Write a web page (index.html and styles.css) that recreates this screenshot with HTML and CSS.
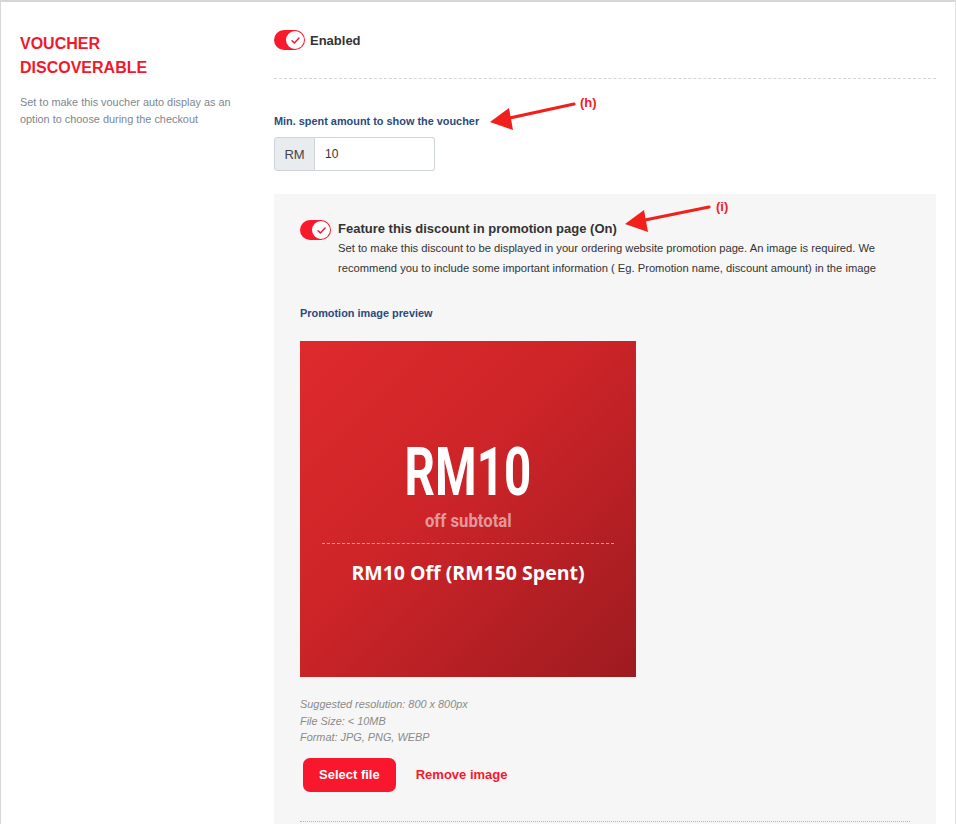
FILE: index.html
```html
<!DOCTYPE html>
<html>
<head>
<meta charset="utf-8">
<link rel="stylesheet" href="styles.css">
</head>
<body>
<div class="page">
  <div class="section">
    <div class="side">
      <h2 class="side-title">VOUCHER<br>DISCOVERABLE</h2>
      <p class="side-desc">Set to make this voucher auto display as an option to choose during the checkout</p>
    </div>
    <div class="main">
      <div class="toggle-row">
        <span class="toggle"><span class="knob"><svg viewBox="0 0 12 12" width="11" height="11"><path d="M2.2 6.3 L4.8 8.6 L9.8 3.4" fill="none" stroke="#f2182c" stroke-width="1.6" stroke-linecap="round" stroke-linejoin="round"/></svg></span></span>
        <span class="toggle-label">Enabled</span>
      </div>
      <div class="dash"></div>
      <label class="field-label">Min. spent amount to show the voucher</label>
      <div class="input-group">
        <span class="addon">RM</span>
        <span class="input">10</span>
      </div>
      <div class="feature-box">
        <div class="feature-row">
          <span class="toggle"><span class="knob"><svg viewBox="0 0 12 12" width="11" height="11"><path d="M2.2 6.3 L4.8 8.6 L9.8 3.4" fill="none" stroke="#f2182c" stroke-width="1.6" stroke-linecap="round" stroke-linejoin="round"/></svg></span></span>
          <div class="feature-text">
            <div class="feature-title">Feature this discount in promotion page (On)</div>
            <div class="feature-desc">Set to make this discount to be displayed in your ordering website promotion page. An image is required. We recommend you to include some important information ( Eg. Promotion name, discount amount) in the image</div>
          </div>
        </div>
        <div class="field-label preview-label">Promotion image preview</div>
        <div class="promo">
          <div class="promo-amount"><span>RM10</span></div>
          <div class="promo-sub"><span>off subtotal</span></div>
          <div class="promo-line"></div>
          <div class="promo-name">RM10 Off (RM150 Spent)</div>
        </div>
        <div class="hints">
          <div>Suggested resolution: 800 x 800px</div>
          <div>File Size: &lt; 10MB</div>
          <div>Format: JPG, PNG, WEBP</div>
        </div>
        <div class="actions">
          <button class="btn-select">Select file</button>
          <button class="btn-remove">Remove image</button>
        </div>
        <div class="dotted"></div>
      </div>
    </div>
  </div>
  <svg class="annotations" width="956" height="260" viewBox="0 0 956 260">
    <g fill="#f2201d" stroke="none">
      <line x1="574" y1="104" x2="505" y2="119" stroke="#f2201d" stroke-width="3.2" stroke-linecap="round"/>
      <polygon points="490,122 509,108 513,130"/>
      <text x="580" y="107" font-family="Liberation Sans, Arial, sans-serif" font-weight="bold" font-size="13">(h)</text>
      <line x1="709" y1="207" x2="640" y2="221" stroke="#f2201d" stroke-width="3.2" stroke-linecap="round"/>
      <polygon points="625,224 644,210 648,232"/>
      <text x="716" y="211" font-family="Liberation Sans, Arial, sans-serif" font-weight="bold" font-size="13">(i)</text>
    </g>
  </svg>
</div>
</body>
</html>
```

FILE: styles.css
```css
* { box-sizing: border-box; }
html, body { margin: 0; padding: 0; background: #fff; }
body {
  font-family: "Liberation Sans", Arial, Helvetica, sans-serif;
  color: #333;
  width: 956px;
  height: 824px;
  overflow: hidden;
}
.page {
  position: relative;
  width: 956px;
  min-height: 824px;
}
.section {
  display: flex;
  border-left: 1px solid #d8d8d8;
  border-top: 2px solid #d6d6d6;
  border-right: 1px solid #e2e2e2;
  min-height: 824px;
  padding: 28px 20px 0 19px;
}
.side {
  width: 254px;
  flex: none;
}
.side-title {
  margin: 2px 0 0;
  color: #f2182c;
  font-size: 16px;
  line-height: 24px;
  font-weight: bold;
}
.side-desc {
  margin: 14px 0 0;
  color: #7c8790;
  font-size: 10.9px;
  line-height: 17px;
  width: 222px;
}
.main {
  flex: 1;
}
.toggle-row {
  display: flex;
  align-items: center;
  gap: 5px;
  height: 20px;
}
.toggle {
  width: 31px;
  height: 20px;
  border-radius: 10px;
  background: #f8192d;
  display: flex;
  align-items: center;
  justify-content: flex-end;
  padding-right: 1px;
  flex: none;
}
.knob {
  width: 18px;
  height: 18px;
  border-radius: 50%;
  background: #fff;
  display: flex;
  align-items: center;
  justify-content: center;
}
.toggle-label {
  font-size: 13px;
  font-weight: bold;
  color: #333;
}
.dash {
  margin-top: 28px;
  border-top: 1px dashed #d4d4d4;
}
.field-label {
  display: block;
  margin-top: 35px;
  color: #2b4a7d;
  font-size: 10.9px;
  font-weight: bold;
  line-height: 14px;
}
.input-group {
  display: flex;
  margin-top: 9px;
  height: 34px;
  width: 161px;
}
.addon {
  width: 41px;
  background: #e9ecef;
  border: 1px solid #ced4da;
  border-radius: 3px 0 0 3px;
  display: flex;
  align-items: center;
  justify-content: center;
  font-size: 13px;
  color: #444;
}
.input {
  flex: 1;
  border: 1px solid #ced4da;
  border-left: none;
  border-radius: 0 3px 3px 0;
  display: flex;
  align-items: center;
  padding-left: 10px;
  font-size: 12px;
  color: #333;
}
.feature-box {
  margin-top: 23px;
  background: #f6f6f6;
  padding: 26px 26px 0 26px;
  min-height: 700px;
}
.feature-row {
  display: flex;
  align-items: flex-start;
  gap: 7px;
}
.feature-title {
  font-size: 13px;
  font-weight: bold;
  line-height: 18px;
  color: #333;
}
.feature-desc {
  font-size: 11.2px;
  line-height: 20px;
  color: #333;
  width: 572px;
}
.preview-label {
  margin-top: 28px;
}
.promo {
  margin-top: 21px;
  width: 336px;
  height: 336px;
  background: linear-gradient(135deg, #de2a2d 0%, #cc2428 45%, #9d1b20 100%);
  display: flex;
  flex-direction: column;
  align-items: center;
  padding-top: 99px;
}
.promo-amount {
  height: 66px;
  display: flex;
  justify-content: center;
  align-items: center;
}
.promo-amount span {
  display: inline-block;
  font-family: Roboto, "DejaVu Sans", sans-serif;
  font-weight: bold;
  font-size: 66px;
  line-height: 66px;
  color: #fff;
  transform: scaleX(0.72);
}
.promo-sub {
  margin-top: 3px;
  height: 24px;
  display: flex;
  justify-content: center;
}
.promo-sub span {
  display: inline-block;
  font-family: Roboto, "DejaVu Sans", sans-serif;
  font-weight: bold;
  font-size: 19px;
  line-height: 24px;
  color: rgba(255, 255, 255, 0.55);
  transform: scaleX(0.88);
}
.promo-line {
  margin-top: 10px;
  width: 292px;
  border-top: 1px dashed rgba(255, 255, 255, 0.55);
}
.promo-name {
  margin-top: 16px;
  font-family: "Open Sans", sans-serif;
  font-weight: bold;
  font-size: 19.5px;
  line-height: 26px;
  color: #fff;
}
.hints {
  margin-top: 19px;
  font-size: 10.9px;
  font-style: italic;
  line-height: 16.5px;
  color: #8a8a8a;
}
.actions {
  margin-top: 12px;
  display: flex;
  align-items: center;
  gap: 20px;
  padding-left: 3px;
}
.btn-select {
  height: 34px;
  padding: 0 16px;
  border: none;
  border-radius: 7px;
  background: #f8172c;
  color: #fff;
  font-family: "Liberation Sans", Arial, sans-serif;
  font-size: 13px;
  font-weight: bold;
}
.btn-remove {
  border: none;
  background: none;
  padding: 0;
  color: #f8172c;
  font-family: "Liberation Sans", Arial, sans-serif;
  font-size: 13px;
  font-weight: bold;
}
.dotted {
  margin-top: 29px;
  border-top: 1px dotted #b5b5b5;
}
.annotations {
  position: absolute;
  left: 0;
  top: 0;
  pointer-events: none;
}
```
